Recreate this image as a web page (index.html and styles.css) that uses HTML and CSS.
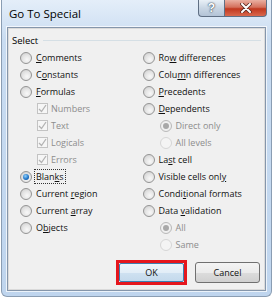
FILE: index.html
```html
<!DOCTYPE html>
<html lang="en">

<head>
    <meta charset="UTF-8">
    <meta name="viewport" content="width=device-width, initial-scale=1.0">
    <title>Go To Special</title>
    <link rel="stylesheet" href="styles.css">
</head>

<body>
    <div class="window">
        <div class="titlebar">
            <span class="title">Go To Special</span>
            <div class="caption">
                <span class="cap help">?</span>
                <span class="cap close">
                    <svg width="12" height="10" viewBox="0 0 12 10">
                        <path d="M2 1 L10 9 M10 1 L2 9" stroke="#5a2a22" stroke-width="3.6" stroke-linecap="round" />
                        <path d="M2 1 L10 9 M10 1 L2 9" stroke="#fff" stroke-width="2" stroke-linecap="round" />
                    </svg>
                </span>
            </div>
        </div>
        <div class="client">
            <div class="group-head">
                <span>Select</span>
                <span class="line"></span>
            </div>
            <div class="cols">
                <div class="col">
                    <div class="opt"><span class="radio"></span><span><u>C</u>omments</span></div>
                    <div class="opt"><span class="radio"></span><span>C<u>o</u>nstants</span></div>
                    <div class="opt"><span class="radio"></span><span><u>F</u>ormulas</span></div>
                    <div class="opt sub off"><span class="check"><svg width="9" height="9" viewBox="0 0 9 9"><path d="M1 5 L3.5 7.5 L8 1" fill="none" stroke="#b3b3b3" stroke-width="1.3" /></svg></span><span>Numbers</span></div>
                    <div class="opt sub off"><span class="check"><svg width="9" height="9" viewBox="0 0 9 9"><path d="M1 5 L3.5 7.5 L8 1" fill="none" stroke="#b3b3b3" stroke-width="1.3" /></svg></span><span>Text</span></div>
                    <div class="opt sub off"><span class="check"><svg width="9" height="9" viewBox="0 0 9 9"><path d="M1 5 L3.5 7.5 L8 1" fill="none" stroke="#b3b3b3" stroke-width="1.3" /></svg></span><span>Logicals</span></div>
                    <div class="opt sub off"><span class="check"><svg width="9" height="9" viewBox="0 0 9 9"><path d="M1 5 L3.5 7.5 L8 1" fill="none" stroke="#b3b3b3" stroke-width="1.3" /></svg></span><span>Errors</span></div>
                    <div class="opt"><span class="radio on"></span><span class="focus">Blan<u>k</u>s</span></div>
                    <div class="opt"><span class="radio"></span><span>Current <u>r</u>egion</span></div>
                    <div class="opt"><span class="radio"></span><span>Current <u>a</u>rray</span></div>
                    <div class="opt"><span class="radio"></span><span>O<u>b</u>jects</span></div>
                </div>
                <div class="col">
                    <div class="opt"><span class="radio"></span><span>Ro<u>w</u> differences</span></div>
                    <div class="opt"><span class="radio"></span><span>Colu<u>m</u>n differences</span></div>
                    <div class="opt"><span class="radio"></span><span><u>P</u>recedents</span></div>
                    <div class="opt"><span class="radio"></span><span><u>D</u>ependents</span></div>
                    <div class="opt sub off"><span class="radio dot"></span><span>Direct only</span></div>
                    <div class="opt sub off"><span class="radio faint"></span><span>All levels</span></div>
                    <div class="opt"><span class="radio"></span><span>La<u>s</u>t cell</span></div>
                    <div class="opt"><span class="radio"></span><span>Visible cells onl<u>y</u></span></div>
                    <div class="opt"><span class="radio"></span><span>Condi<u>t</u>ional formats</span></div>
                    <div class="opt"><span class="radio"></span><span>Data <u>v</u>alidation</span></div>
                    <div class="opt sub off"><span class="radio dot"></span><span>All</span></div>
                    <div class="opt sub off"><span class="radio faint"></span><span>Same</span></div>
                </div>
            </div>
            <div class="buttons">
                <div class="mark"><span class="btn ok">OK</span></div>
                <span class="btn">Cancel</span>
            </div>
        </div>
    </div>
</body>

</html>
```

FILE: styles.css
```css
body {
    margin: 0;
    font-family: "Open Sans", "Liberation Sans", sans-serif;
    background: #fff;
}

.window {
    width: 271px;
    height: 297px;
    margin-left: 1px;
    border: 1px solid #8a9db3;
    border-top: none;
    border-radius: 0 0 6px 6px;
    background: linear-gradient(#e4eef9, #c9dcf1 40px, #bfd5ee);
    box-sizing: border-box;
    padding: 0 5px 5px 5px;
    display: flex;
    flex-direction: column;
}

.titlebar {
    height: 27px;
    display: flex;
    align-items: flex-start;
    justify-content: space-between;
}

.title {
    font-size: 11.5px;
    color: #000;
    margin: 6px 0 0 2px;
}

.caption {
    display: flex;
    margin-right: -1px;
}

.cap {
    height: 17px;
    box-sizing: border-box;
    border: 1px solid #5f6f84;
    border-top: none;
    display: flex;
    align-items: center;
    justify-content: center;
}

.help {
    width: 26px;
    border-radius: 0 0 0 4px;
    border-right: none;
    background: linear-gradient(#e9f0f7, #c9d6e4 50%, #b3c3d6);
    color: #fff;
    font-family: "Liberation Sans", sans-serif;
    font-weight: bold;
    font-size: 12px;
    text-shadow: 0 0 2px #304050, 0 0 1px #304050;
}

.close {
    width: 43px;
    border-radius: 0 0 4px 0;
    background: linear-gradient(#eab0a2, #d4705c 45%, #c1381f 55%, #d9684d);
}

.client {
    flex: 1;
    background: #f0f0f0;
    border: 1px solid #8596ab;
    box-shadow: 0 0 0 1px rgba(255, 255, 255, 0.7), inset 1px 1px 0 #dadada, inset -1px -1px 0 #dadada;
    display: flex;
    flex-direction: column;
    padding-top: 6px;
}

.group-head {
    display: flex;
    align-items: center;
    font-size: 9.5px;
    height: 12px;
    padding: 0 4px 0 4px;
}

.line {
    flex: 1;
    height: 1px;
    background: #d5dfe5;
    margin-left: 5px;
}

.cols {
    display: flex;
    padding-left: 12px;
    margin-top: 3px;
}

.col {
    width: 125px;
}

.opt {
    height: 17px;
    display: flex;
    align-items: center;
    font-size: 9px;
    color: #111;
}

.opt u {
    text-underline-offset: 1px;
}

.sub {
    padding-left: 17px;
}

.off {
    color: #8d8d8d;
}

.radio {
    width: 12px;
    height: 12px;
    border-radius: 50%;
    box-sizing: border-box;
    border: 1px solid #949494;
    background: radial-gradient(circle at 60% 65%, #f8f8f8, #e6e6e6 45%, #c9c9c9);
    margin-right: 4px;
    display: flex;
    align-items: center;
    justify-content: center;
}

.radio.on::after {
    content: "";
    width: 6px;
    height: 6px;
    border-radius: 50%;
    background: radial-gradient(circle at 40% 35%, #8fd2ff, #1c6fc2 60%, #0d4f8f);
}

.radio.dot {
    border-color: #b9b9b9;
    background: radial-gradient(circle, #fafafa, #e8e8e8);
}

.radio.dot::after {
    content: "";
    width: 6px;
    height: 6px;
    border-radius: 50%;
    background: #a8a8a8;
}

.radio.faint {
    border-color: #d6d6d6;
    background: #f4f4f4;
}

.check {
    width: 11px;
    height: 11px;
    box-sizing: border-box;
    border: 1px solid #c3c3c3;
    background: #f6f6f6;
    margin-right: 3px;
    display: flex;
    align-items: center;
    justify-content: center;
}

.focus {
    outline: 1px dotted #333;
    outline-offset: 0;
    padding: 0 1px;
    margin-left: -1px;
}

.buttons {
    display: flex;
    justify-content: flex-end;
    align-items: center;
    gap: 8px;
    padding-right: 5px;
    margin-top: 7px;
}

.mark {
    border: 3px solid #e5161d;
}

.btn {
    width: 65px;
    height: 21px;
    box-sizing: border-box;
    border: 1px solid #707070;
    border-radius: 3px;
    background: linear-gradient(#f4f4f4, #ebebeb 50%, #dcdcdc 51%, #d0d0d0);
    font-size: 9px;
    color: #111;
    display: flex;
    align-items: center;
    justify-content: center;
}

.btn.ok {
    height: 19px;
    border-color: #3c7fb1;
    border-radius: 2px;
    background: linear-gradient(#eef5fb, #e2edf7 50%, #cfe1f1 51%, #c4d9ec);
}
```
